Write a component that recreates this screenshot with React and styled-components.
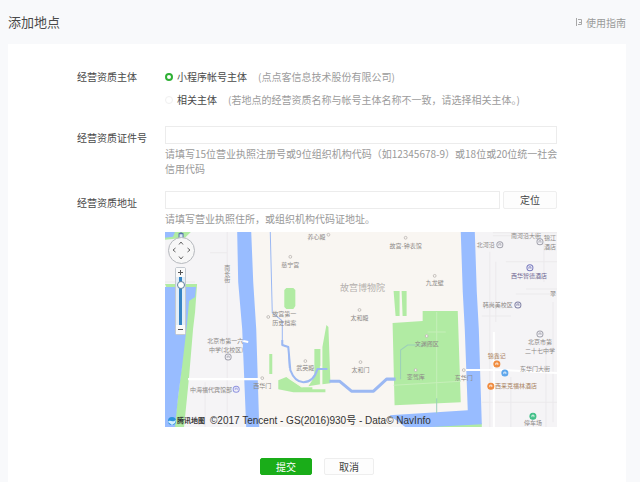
import { useState } from "react";
import styled, { createGlobalStyle } from "styled-components";

const GlobalStyle = createGlobalStyle`
  * {
    box-sizing: border-box;
  }

  body {
    margin: 0;
    background-color: #f8f9fb;
    color: #4a4a4a;
    font-family: "Noto Sans CJK SC", "Liberation Sans", sans-serif;
    font-size: 10px;
    line-height: 15px;
  }

  button,
  input {
    font: inherit;
    color: inherit;
    margin: 0;
  }
`;

const Page = styled.div`
  display: flex;
  flex-direction: column;
  min-height: 100vh;
  padding: 0 14px 0 8px;
`;

const Header = styled.header`
  display: flex;
  justify-content: space-between;
  align-items: center;
  height: 44px;
`;

const Title = styled.h1`
  margin: 0;
  font-size: 13px;
  font-weight: 400;
  line-height: 20px;
`;

const GuideLink = styled.a`
  display: flex;
  align-items: center;
  gap: 3px;
  color: #999999;
  text-decoration: none;
`;

const Card = styled.main`
  flex: 1;
  padding: 25px 69px 6px;
  background-color: #ffffff;
`;

const Row = styled.div`
  display: flex;
  margin-bottom: ${(props) => props.$space}px;
`;

const Label = styled.label`
  width: 88px;
  flex-shrink: 0;
  padding-top: ${(props) => (props.$input ? 4 : 0)}px;
`;

const Field = styled.div`
  flex: 1;
  min-width: 0;
`;

const RadioList = styled.div`
  display: flex;
  flex-direction: column;
  gap: 8px;
`;

const RadioLine = styled.label`
  display: flex;
  align-items: center;
  white-space: nowrap;
`;

const Radio = styled.input`
  appearance: none;
  width: 8px;
  height: 8px;
  margin-right: 4px;
  border: 1px solid #f0f0f0;
  border-radius: 50%;

  &:checked {
    border: 2px solid #2fb035;
  }
`;

const Remark = styled.span`
  margin-left: 11px;
  color: #9c9c9c;
`;

const InputLine = styled.div`
  display: flex;
  gap: 3px;
`;

const TextInput = styled.input`
  flex: 1;
  min-width: 0;
  height: 18px;
  padding: 0 4px;
  border: 1px solid #ececec;
  background-color: #ffffff;
`;

const Hint = styled.p`
  margin: 2px -4px 0 0;
  color: #999999;
`;

const Button = styled.button`
  width: ${(props) => props.$width}px;
  height: ${(props) => props.$height}px;
  padding: 0;
  border: 1px solid ${(props) => (props.$primary ? "#1aad19" : "#eeeeee")};
  border-radius: 2px;
  background-color: ${(props) => (props.$primary ? "#1aad19" : "#fdfdfd")};
  color: ${(props) => (props.$primary ? "#ffffff" : "#444444")};
  line-height: 14px;
`;

const Actions = styled.div`
  display: flex;
  justify-content: center;
  gap: 12px;
  margin-top: 31px;
`;

const MapBox = styled.div`
  position: relative;
  height: 195px;
  margin-top: 6px;
  overflow: hidden;
  background-color: #f5f4f6;
`;

const MapCanvas = styled.svg`
  display: block;
  width: 100%;
  height: 100%;
`;

const PlaceText = styled.text`
  fill: ${(props) => props.$color || "#8c8886"};
  font-size: ${(props) => props.$size || 6}px;
  text-anchor: middle;
`;

const StreetText = styled(PlaceText)`
  writing-mode: vertical-rl;
`;

const PanControl = styled.div`
  position: absolute;
  top: 5px;
  left: 3px;
  display: grid;
  grid-template-columns: repeat(3, 1fr);
  width: 27px;
  height: 27px;
  padding: 1px;
  border: 1px solid #b5b8bd;
  border-radius: 50%;
  background-color: #f7f7f7;
`;

const PanButton = styled.button`
  grid-area: ${(props) => props.$area};
  display: flex;
  align-items: center;
  justify-content: center;
  padding: 0;
  border: 0;
  background: none;

  svg {
    transform: rotate(${(props) => props.$angle}deg);
  }
`;

const ZoomControl = styled.div`
  position: absolute;
  top: 35px;
  left: 10px;
  display: flex;
  flex-direction: column;
  align-items: center;
  width: 11px;
  border: 1px solid #c4c9d0;
  border-radius: 2px;
  background-color: #ffffff;
`;

const ZoomButton = styled.button`
  display: flex;
  align-items: center;
  justify-content: center;
  width: 9px;
  height: 9px;
  padding: 0;
  border: 0;
  background-color: #fafafa;
`;

const ZoomSlider = styled.input`
  appearance: none;
  writing-mode: vertical-lr;
  direction: rtl;
  width: 9px;
  height: 48px;
  background: linear-gradient(#3584c4, #3584c4) center / 3px 100% no-repeat #e4eef7;

  &::-webkit-slider-thumb {
    appearance: none;
    width: 8px;
    height: 8px;
    border: 1px solid #5d7f9c;
    border-radius: 50%;
    background-color: #ffffff;
  }
`;

const Credit = styled.div`
  position: absolute;
  bottom: 0;
  left: 3px;
  display: flex;
  align-items: center;
  color: #333333;
  font-family: "Liberation Sans", "Noto Sans CJK SC", sans-serif;
  line-height: 12px;
  white-space: nowrap;
`;

const MapBrand = styled.span`
  margin: 0 5px 0 1px;
  font-size: 7px;
  font-weight: 700;
`;

const places = [
  { name: "养心殿", x: 151, y: 7, pin: [163, 3] },
  { name: "故宫-钟表馆", x: 240, y: 16, pin: [240, 6] },
  { name: "慈宁宫", x: 125, y: 35, pin: [125, 25] },
  { name: "太和殿", x: 194, y: 88, pin: [194, 78] },
  { name: "九龙壁", x: 269, y: 53, pin: [269, 44] },
  { name: "故宫第一", x: 119, y: 84, pin: [103, 85] },
  { name: "历史档案", x: 119, y: 93 },
  { name: "武英殿", x: 140, y: 138, pin: [140, 129] },
  { name: "太和门", x: 195, y: 140, pin: [195, 130] },
  { name: "文渊阁区", x: 261, y: 114, pin: [261, 104] },
  { name: "銮驾库", x: 250, y: 147, pin: [250, 138] },
  { name: "东华门", x: 298, y: 148, pin: [298, 138] },
  { name: "西华门", x: 97, y: 156, pin: [97, 146] },
  { name: "北京市第一六", x: 60, y: 111 },
  { name: "中学(北校区)", x: 61, y: 120 },
  { name: "中海福代宾馆部", x: 46, y: 160 },
  { name: "北河沿", x: 320, y: 15 },
  { name: "南河沿大街", x: 360, y: 6 },
  { name: "锦江", x: 384, y: 8 },
  { name: "酒店", x: 384, y: 17 },
  { name: "西华智德酒店", x: 363, y: 46, color: "#6d6591" },
  { name: "韩尚美校区", x: 332, y: 75 },
  { name: "翠", x: 387, y: 64 },
  { name: "北京市第", x: 374, y: 112 },
  { name: "二十七中学", x: 374, y: 121 },
  { name: "锦鑫记", x: 331, y: 126, color: "#a9825f" },
  { name: "东华门大街", x: 369, y: 139 },
  { name: "西来克福林酒店", x: 350, y: 156, color: "#a9825f" },
  { name: "停车场", x: 367, y: 193 },
];

const markers = [
  { x: 63, y: 125, color: "#a3a3ad" },
  { x: 71, y: 157, color: "#8f93e0" },
  { x: 334, y: 13, color: "#a3a3ad" },
  { x: 374, y: 10, color: "#a3a3ad" },
  { x: 364, y: 36, color: "#7779bd" },
  { x: 352, y: 73, color: "#8183a6" },
  { x: 374, y: 102, color: "#a3a3ad" },
  { x: 331, y: 132, color: "#f08a3c", solid: true },
  { x: 339, y: 141, color: "#5aa5ec", solid: true },
  { x: 325, y: 154, color: "#f08a3c", solid: true },
  { x: 367, y: 184, color: "#3fbf87", solid: true },
];

const arrows = [
  { label: "向上", area: "1 / 2", angle: 0 },
  { label: "向左", area: "2 / 1", angle: -90 },
  { label: "向右", area: "2 / 3", angle: 90 },
  { label: "向下", area: "3 / 2", angle: 180 },
];

function PalaceMap() {
  return (
    <MapCanvas
      viewBox="0 0 391 195"
      preserveAspectRatio="xMidYMid slice"
      role="img"
      aria-label="故宫博物院地图"
    >
      <path d="M80 0H300L302 180L225 195H90Z" fill="#f9f6f2" />

      {/* 道路 */}
      <g fill="none" stroke="#ebe9ec" strokeWidth="1">
        <path d="M62 0V195M45 21H62M0 50H30M40 150V195" />
        <path d="M324 20V195M330 30V90M327 1H391M327 4H391M340 30H391M360 57H391M350 62H391" />
        <path d="M316 84H345M378 10V50M387 70V190M380 120V195M345 145V195M316 170H391" />
      </g>
      <path d="M316 138L340 138L391 141M328 100V195" fill="none" stroke="#ffffff" strokeWidth="2" />

      {/* 绿地 */}
      <g fill="#b1eba3">
        <path d="M0 0H26L20 6L0 8Z" />
        <path d="M0 52H32L30 80L28 97L24 145L19 195H8L11 180L16 140L20 97Z" />
        <path d="M121 56H128L130 58V74L128 77H121L119 75V58Z" />
        <path d="M228 59H234V84H230ZM236 59H241V84H237Z" />
        <path d="M227 91L257 89V79H292L295 170L229 173Z" />
        <path d="M104 122H107V142H104ZM157 115L161 93L163 95L165 151L157 152Z" />
        <path d="M149 117H155V152L143 154L149 145Z" />
        <path d="M113 148L121 145L124 147L136 155H147V157L160 157V160H128L113 157Z" />
        <path d="M262 191H316V195H262Z" />
      </g>
      <path d="M122 144L137 155M155 134V154" fill="none" stroke="#f4f7e9" strokeWidth="1" />

      {/* 水系 */}
      <g fill="#98bcff">
        <path d="M0 55H31L30 65L24 69L22 92L17 135L13 165L10 195H0ZM0 0H10L8 5L0 6Z" />
        <path d="M72 0H86L88 50L91 97L94 195H81L77 97L73 50Z" />
        <path d="M295 0H309L311 60L313 97L316 192L262 195H240L224 183L302 178L299 97L297 60Z" />
      </g>
      <g fill="none" stroke="#9bb8f3" strokeLinejoin="round">
        <path d="M105 0L107 81L117 89V113L123 115L124 136" strokeWidth="1" />
        <path d="M117 108V113L123 115L125 138C128 146 133 150 138 150C146 150 150 144 152 137H162" strokeWidth="2" />
        <path d="M164 149H174L186 159H208L221 147H230" strokeWidth="3" />
      </g>
      <path d="M235 147V118L242 113H258M271 166V181" fill="none" stroke="#9bcfba" />
      <path d="M271 80V166M228 153L295 149M262 100H280" fill="none" stroke="#c6efb9" />
      <path d="M23 147H97M298 138H317M78 109L83 110" fill="none" stroke="#ffffff" strokeWidth="2" />

      <PlaceText x="197" y="59" $size={9} $color="#b4b0ad">
        故宫博物院
      </PlaceText>
      <StreetText x="62" y="42">
        南长街
      </StreetText>
      {places.map((place) => (
        <g key={place.name}>
          {place.pin && (
            <circle
              cx={place.pin[0]}
              cy={place.pin[1]}
              r="1.4"
              fill="#f9f6f2"
              stroke="#b9b4b0"
              strokeWidth="0.8"
            />
          )}
          <PlaceText x={place.x} y={place.y} $color={place.color}>
            {place.name}
          </PlaceText>
        </g>
      ))}
      {markers.map((marker) => (
        <g key={`${marker.x}-${marker.y}`}>
          <circle
            cx={marker.x}
            cy={marker.y}
            r="3"
            fill={marker.solid ? marker.color : "#f5f4f9"}
            stroke={marker.color}
          />
          <path
            d={`M${marker.x - 1} ${marker.y + 1}v-2h2v2`}
            fill="none"
            stroke={marker.solid ? "#ffffff" : marker.color}
            strokeWidth="0.8"
          />
        </g>
      ))}
      <path d="M14 2h4v5h-4zM14 2l2-1 2 1" fill="#dbe7fa" stroke="#5674a8" />
    </MapCanvas>
  );
}

function MapControls() {
  const [level, setLevel] = useState(14);

  return (
    <>
      <PanControl>
        {arrows.map((arrow) => (
          <PanButton
            key={arrow.label}
            type="button"
            aria-label={arrow.label}
            $area={arrow.area}
            $angle={arrow.angle}
          >
            <svg width="6" height="4" viewBox="0 0 6 4">
              <path d="M1 3.5L3 1L5 3.5" fill="none" stroke="#666666" />
            </svg>
          </PanButton>
        ))}
      </PanControl>
      <ZoomControl>
        <ZoomButton type="button" aria-label="放大" onClick={() => setLevel(level + 1)}>
          <svg width="5" height="5" viewBox="0 0 5 5">
            <path d="M0 2.5H5M2.5 0V5" stroke="#555555" />
          </svg>
        </ZoomButton>
        <ZoomSlider
          type="range"
          aria-label="缩放级别"
          min="4"
          max="15"
          value={level}
          onChange={(e) => setLevel(Number(e.target.value))}
        />
        <ZoomButton type="button" aria-label="缩小" onClick={() => setLevel(level - 1)}>
          <svg width="5" height="5" viewBox="0 0 5 5">
            <path d="M0 2.5H5" stroke="#555555" />
          </svg>
        </ZoomButton>
      </ZoomControl>
      <Credit>
        <svg width="8" height="8" viewBox="0 0 8 8">
          <circle cx="4" cy="4" r="4" fill="#2f92dc" />
          <path d="M0 5C2 2 4 6 8 3L7 6L4 8Z" fill="#d3efff" />
        </svg>
        <MapBrand>腾讯地图</MapBrand>
        ©2017 Tencent - GS(2016)930号 - Data© NavInfo
      </Credit>
    </>
  );
}

export default function App() {
  const [subject, setSubject] = useState("account");

  return (
    <>
      <GlobalStyle />
      <Page>
        <Header>
          <Title>添加地点</Title>
          <GuideLink href="#guide">
            <svg width="8" height="8" viewBox="0 0 8 8">
              <path d="M1.5 0V8M3 1.5H6.5V6.5H3M4 4.5H6" fill="none" stroke="#a8a8a8" />
            </svg>
            使用指南
          </GuideLink>
        </Header>

        <Card>
          <Row $space={19}>
            <Label as="span">经营资质主体</Label>
            <Field>
              <RadioList role="radiogroup" aria-label="经营资质主体">
                <RadioLine>
                  <Radio
                    type="radio"
                    name="subject"
                    checked={subject === "account"}
                    onChange={() => setSubject("account")}
                  />
                  小程序帐号主体
                  <Remark>(点点客信息技术股份有限公司)</Remark>
                </RadioLine>
                <RadioLine>
                  <Radio
                    type="radio"
                    name="subject"
                    checked={subject === "related"}
                    onChange={() => setSubject("related")}
                  />
                  相关主体
                  <Remark>(若地点的经营资质名称与帐号主体名称不一致，请选择相关主体。)</Remark>
                </RadioLine>
              </RadioList>
            </Field>
          </Row>

          <Row $space={15}>
            <Label htmlFor="license" $input>
              经营资质证件号
            </Label>
            <Field>
              <InputLine>
                <TextInput id="license" type="text" />
              </InputLine>
              <Hint>
                请填写15位营业执照注册号或9位组织机构代码（如12345678-9）或18位或20位统一社会信用代码
              </Hint>
            </Field>
          </Row>

          <Row $space={0}>
            <Label htmlFor="address" $input>
              经营资质地址
            </Label>
            <Field>
              <InputLine>
                <TextInput id="address" type="text" />
                <Button type="button" $width={54} $height={18}>
                  定位
                </Button>
              </InputLine>
              <Hint>请填写营业执照住所，或组织机构代码证地址。</Hint>
              <MapBox>
                <PalaceMap />
                <MapControls />
              </MapBox>
            </Field>
          </Row>

          <Actions>
            <Button type="submit" $primary $width={52} $height={17}>
              提交
            </Button>
            <Button type="button" $width={50} $height={17}>
              取消
            </Button>
          </Actions>
        </Card>
      </Page>
    </>
  );
}
